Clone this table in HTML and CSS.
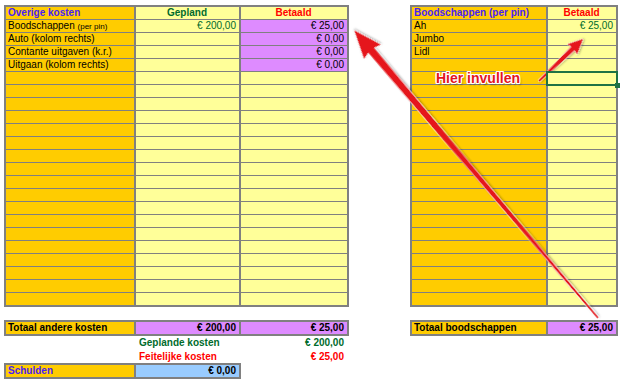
FILE: index.html
```html
<!DOCTYPE html>
<html lang="nl">
<head>
<meta charset="utf-8">
<title>Boodschappen</title>
<link rel="stylesheet" href="styles.css">
</head>
<body>
<div class="sheet">
  <div class="tables">
    <div class="grid grid-left">
      <div class="c o h blue">Overige kosten</div><div class="c y h green ctr">Gepland</div><div class="c y h red ctr">Betaald</div>
      <div class="c o">Boodschappen <span class="small">(per pin)</span></div><div class="c y r green">€ 200,00</div><div class="c p r">€ 25,00</div>
      <div class="c o">Auto (kolom rechts)</div><div class="c y"></div><div class="c p r">€ 0,00</div>
      <div class="c o">Contante uitgaven (k.r.)</div><div class="c y"></div><div class="c p r">€ 0,00</div>
      <div class="c o">Uitgaan (kolom rechts)</div><div class="c y"></div><div class="c p r">€ 0,00</div>
      <div class="c o"></div><div class="c y"></div><div class="c y"></div>
      <div class="c o"></div><div class="c y"></div><div class="c y"></div>
      <div class="c o"></div><div class="c y"></div><div class="c y"></div>
      <div class="c o"></div><div class="c y"></div><div class="c y"></div>
      <div class="c o"></div><div class="c y"></div><div class="c y"></div>
      <div class="c o"></div><div class="c y"></div><div class="c y"></div>
      <div class="c o"></div><div class="c y"></div><div class="c y"></div>
      <div class="c o"></div><div class="c y"></div><div class="c y"></div>
      <div class="c o"></div><div class="c y"></div><div class="c y"></div>
      <div class="c o"></div><div class="c y"></div><div class="c y"></div>
      <div class="c o"></div><div class="c y"></div><div class="c y"></div>
      <div class="c o"></div><div class="c y"></div><div class="c y"></div>
      <div class="c o"></div><div class="c y"></div><div class="c y"></div>
      <div class="c o"></div><div class="c y"></div><div class="c y"></div>
      <div class="c o"></div><div class="c y"></div><div class="c y"></div>
      <div class="c o"></div><div class="c y"></div><div class="c y"></div>
      <div class="c o"></div><div class="c y"></div><div class="c y"></div>
      <div class="c o"></div><div class="c y"></div><div class="c y"></div>
    </div>
    <div class="grid grid-right">
      <div class="c o h blue">Boodschappen (per pin)</div><div class="c y h red ctr">Betaald</div>
      <div class="c o">Ah</div><div class="c y r green">€ 25,00</div>
      <div class="c o">Jumbo</div><div class="c y"></div>
      <div class="c o">Lidl</div><div class="c y"></div>
      <div class="c o"></div><div class="c y"></div>
      <div class="c o"></div><div class="c y sel"></div>
      <div class="c o"></div><div class="c y"></div>
      <div class="c o"></div><div class="c y"></div>
      <div class="c o"></div><div class="c y"></div>
      <div class="c o"></div><div class="c y"></div>
      <div class="c o"></div><div class="c y"></div>
      <div class="c o"></div><div class="c y"></div>
      <div class="c o"></div><div class="c y"></div>
      <div class="c o"></div><div class="c y"></div>
      <div class="c o"></div><div class="c y"></div>
      <div class="c o"></div><div class="c y"></div>
      <div class="c o"></div><div class="c y"></div>
      <div class="c o"></div><div class="c y"></div>
      <div class="c o"></div><div class="c y"></div>
      <div class="c o"></div><div class="c y"></div>
      <div class="c o"></div><div class="c y"></div>
      <div class="c o"></div><div class="c y"></div>
      <div class="c o"></div><div class="c y"></div>
    </div>
  </div>

  <div class="summary">
    <div class="summary-left">
      <div class="box box3">
        <div class="c o h">Totaal andere kosten</div><div class="c p h r">€ 200,00</div><div class="c p h r">€ 25,00</div>
      </div>
      <div class="notes">
        <div></div><div class="n h green">Geplande kosten</div><div class="n h green r">€ 200,00</div>
        <div></div><div class="n h red">Feitelijke kosten</div><div class="n h red r">€ 25,00</div>
      </div>
      <div class="box box2">
        <div class="c o h blue">Schulden</div><div class="c b h r">€ 0,00</div>
      </div>
    </div>
    <div class="box boxr">
      <div class="c o h">Totaal boodschappen</div><div class="c p h r">€ 25,00</div>
    </div>
  </div>

  <svg class="arrows" width="626" height="386" viewBox="0 0 626 386" aria-hidden="true">
    <defs>
      <filter id="sh" x="-20%" y="-20%" width="140%" height="140%">
        <feDropShadow dx="0.6" dy="1" stdDeviation="0.8" flood-color="#000" flood-opacity="0.35"/>
      </filter>
    </defs>
    <g transform="translate(598 318) rotate(-130.27)" filter="url(#sh)">
      <polygon class="arrow" points="0,-0.8 351,-3.8 349,-11 377,0 349,11 351,3.8 0,0.8"/>
    </g>
    <g transform="translate(539 81) rotate(-43.67)" filter="url(#sh)">
      <polygon class="arrow" points="0,-0.9 47,-2.4 46,-7 61,0 46,7 47,2.4 0,0.9"/>
    </g>
  </svg>
  <div class="callout">Hier invullen</div>
</div>
</body>
</html>
```

FILE: styles.css
```css
* { box-sizing: border-box; }
html, body { margin: 0; padding: 0; background: #fff; }
body {
  font-family: "Liberation Sans", Arial, sans-serif;
  font-size: 10px;
  color: #000;
}
.sheet {
  position: relative;
  width: 626px;
  height: 386px;
  padding: 5px 0 0 4px;
  overflow: hidden;
}
.tables { display: flex; gap: 61px; align-items: flex-start; }
.grid {
  display: grid;
  background: #808080;
  padding: 2px;
  column-gap: 2px;
  row-gap: 1px;
  grid-auto-rows: 12px;
}
.grid-left { grid-template-columns: 128px 103px 106px; }
.grid-right { grid-template-columns: 134px 68px; }
.c {
  line-height: 12px;
  padding: 0 3px 0 2px;
  white-space: nowrap;
  overflow: hidden;
}
.o { background: #ffcc00; }
.y { background: #ffff99; }
.p { background: #de8bff; }
.b { background: #99ccff; }
.r { text-align: right; }
.ctr { text-align: center; }
.h { font-weight: bold; }
.blue { color: #4a1ef5; }
.green { color: #006b2c; }
.red { color: #ff0000; }
.small { font-size: 8px; }

.sel { position: relative; overflow: visible; z-index: 2; }
.sel::after {
  content: "";
  position: absolute;
  left: -2px; right: -2px; top: -1px; bottom: -2px;
  border: 2px solid #1f7244;
}
.sel::before {
  content: "";
  position: absolute;
  right: -4px; bottom: -4px;
  width: 5px; height: 5px;
  background: #1f7244;
  z-index: 3;
}

.summary { display: flex; gap: 61px; margin-top: 13px; align-items: flex-start; }
.box {
  display: grid;
  background: #808080;
  padding: 2px;
  column-gap: 2px;
  grid-auto-rows: 12px;
}
.box3 { grid-template-columns: 128px 103px 106px; width: 345px; }
.box2 { grid-template-columns: 128px 103px; width: 237px; }
.boxr { grid-template-columns: 134px 68px; }
.notes {
  display: grid;
  grid-template-columns: 128px 103px 106px;
  column-gap: 2px;
  padding: 0 2px;
  grid-auto-rows: 13.5px;
}
.n { line-height: 13.5px; padding: 0 3px; white-space: nowrap; }

.arrows { position: absolute; left: 0; top: 0; pointer-events: none; }
.arrow { fill: #e5161c; stroke: #ffffff; stroke-width: 1; paint-order: stroke; stroke-linejoin: round; }
.callout {
  position: absolute;
  left: 436px;
  top: 70px;
  font-family: "Liberation Sans", Arial, sans-serif;
  font-weight: bold;
  font-size: 14px;
  line-height: 16px;
  color: #e5161c;
  text-shadow: -1px 0 0 #fff, 1px 0 0 #fff, 0 -1px 0 #fff, 0 1px 0 #fff,
               -1px -1px 0 #fff, 1px 1px 0 #fff, -1px 1px 0 #fff, 1px -1px 0 #fff,
               1.5px 2px 2px rgba(0,0,0,0.35);
}
```
